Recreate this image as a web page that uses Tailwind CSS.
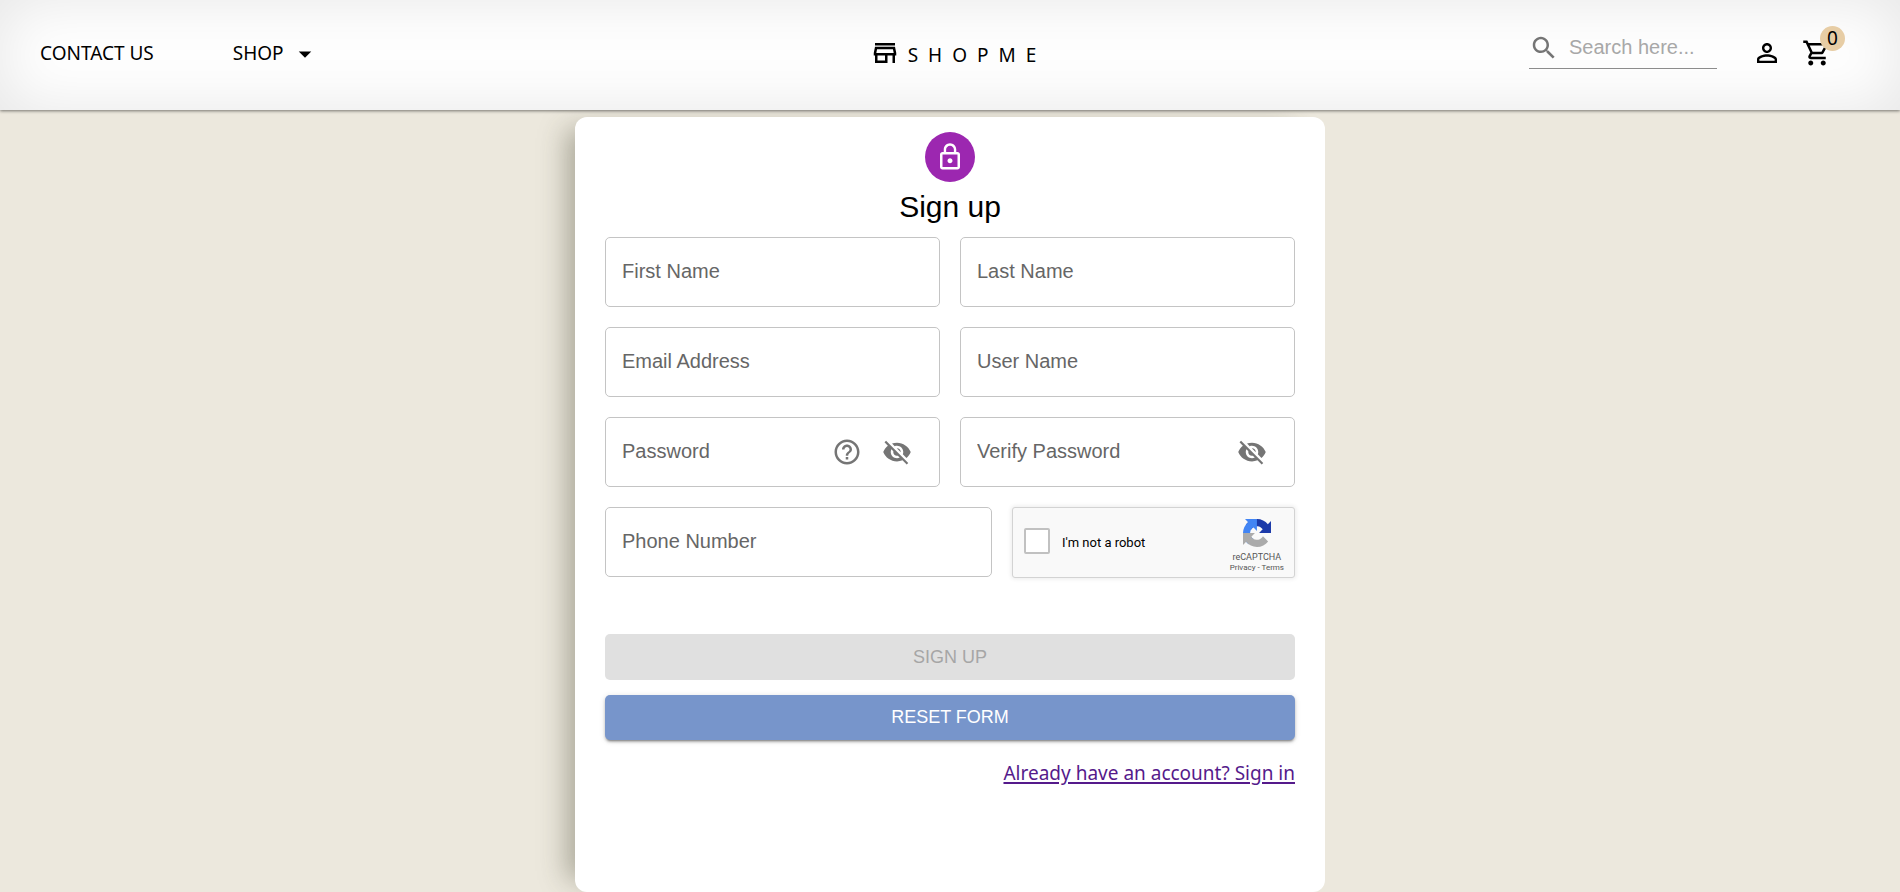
<!DOCTYPE html>
<html lang="en">
<head>
<meta charset="utf-8">
<meta name="viewport" content="width=device-width, initial-scale=1">
<title>ShopMe - Sign up</title>
<script src="https://cdn.jsdelivr.net/npm/@tailwindcss/browser@4"></script>
</head>
<body class="flex min-h-screen flex-col bg-[#ece8dd] font-['Liberation_Sans',Arial,sans-serif] text-xl text-black">

<header class="relative grid h-[110px] grid-cols-[1fr_auto_1fr] items-center bg-white pr-6 pb-1 pl-10 font-['Noto_Sans',sans-serif] text-[19px] shadow-[inset_0_0_64px_rgba(0,0,0,0.1),0_1px_3px_rgba(0,0,0,0.5)]">
  <nav class="flex items-center gap-[79px] pt-px" aria-label="Main">
    <a href="#contact">CONTACT US</a>
    <button type="button" class="flex items-center gap-1.5">SHOP
      <svg class="size-[30px]" viewBox="0 0 24 24" fill="currentColor" aria-hidden="true"><path d="m7 10 5 5 5-5z"/></svg>
    </button>
  </nav>

  <a href="#home" class="flex items-center gap-2">
    <svg class="size-[30px]" viewBox="0 0 24 24" fill="currentColor" aria-hidden="true"><path d="m18.36 9 .6 3H5.04l.6-3h12.72M20 4H4v2h16V4zm0 3H4l-1 5v2h1v6h10v-6h4v6h2v-6h1v-2l-1-5zM6 18v-4h6v4H6z"/></svg>
    <span class="pt-1 tracking-[10px]">SHOPME</span>
  </a>

  <div class="flex items-center justify-end pr-[34px]">
    <div class="mr-[25px] mb-[9px] flex h-10 w-[188px] items-center gap-2.5 border-b border-[#8c8c8c] pb-px font-['Liberation_Sans',Arial,sans-serif] text-xl">
      <svg class="size-[30px] shrink-0 text-[#757575]" viewBox="0 0 24 24" fill="currentColor" aria-hidden="true"><path d="M15.5 14h-.79l-.28-.27C15.41 12.59 16 11.11 16 9.5 16 5.91 13.09 3 9.5 3S3 5.91 3 9.5 5.91 16 9.5 16c1.61 0 3.09-.59 4.23-1.57l.27.28v.79l5 4.99L20.49 19l-4.99-5zm-6 0C7.01 14 5 11.99 5 9.5S7.01 5 9.5 5 14 7.01 14 9.5 11.99 14 9.5 14z"/></svg>
      <input type="search" aria-label="Search" placeholder="Search here..." class="h-8 w-full min-w-0 bg-transparent outline-none placeholder:text-[#a8a8a8]">
    </div>
    <button type="button" class="flex size-[50px] items-center justify-center" aria-label="Account">
      <svg class="size-[30px]" viewBox="0 0 24 24" fill="currentColor" aria-hidden="true"><path d="M12 5.9c1.16 0 2.1.94 2.1 2.1s-.94 2.1-2.1 2.1S9.900 9.160 9.900 8s.94-2.1 2.1-2.1m0 9c2.970 0 6.100 1.460 6.100 2.100v1.100H5.900V17c0-.64 3.130-2.100 6.100-2.100M12 4C9.790 4 8 5.790 8 8s1.790 4 4 4 4-1.790 4-4-1.790-4-4-4zm0 9c-2.670 0-8 1.340-8 4v3h16v-3c0-2.660-5.330-4-8-4z"/></svg>
    </button>
    <button type="button" class="relative flex size-[50px] items-center justify-center" aria-label="Cart, 0 items">
      <svg class="size-[30px]" viewBox="0 0 24 24" fill="currentColor" aria-hidden="true"><path d="M15.550 13c.75 0 1.410-.41 1.750-1.030l3.580-6.490c.37-.66-.11-1.480-.87-1.480H5.210l-.94-2H1v2h2l3.600 7.590-1.350 2.440C4.520 15.370 5.480 17 7 17h12v-2H7l1.100-2h7.450zM6.160 6h12.150l-2.760 5H8.530L6.160 6zM7 18c-1.100 0-1.990.9-1.990 2S5.900 22 7 22s2-.9 2-2-.9-2-2-2zm10 0c-1.100 0-1.990.9-1.990 2s.89 2 1.990 2 2-.9 2-2-.9-2-2-2z"/></svg>
      <span class="absolute top-[-2px] right-[-3px] flex size-[25px] items-center justify-center rounded-full bg-[#e7cda5]">0</span>
    </button>
  </div>
</header>

<main class="mx-auto mt-[7px] flex w-full max-w-[750px] grow flex-col items-center rounded-xl bg-white px-[30px] pt-[15px] pb-10 shadow-[-20px_0_26px_-12px_rgba(60,60,40,0.38)]">
  <div class="flex size-[50px] items-center justify-center rounded-full bg-[#9c27b0] text-white">
    <svg class="size-[30px]" viewBox="0 0 24 24" fill="currentColor" aria-hidden="true"><path d="M12 17c1.100 0 2-.9 2-2s-.9-2-2-2-2 .9-2 2 .9 2 2 2zm6-9h-1V6c0-2.760-2.240-5-5-5S7 3.240 7 6v2H6c-1.100 0-2 .9-2 2v10c0 1.100.9 2 2 2h12c1.100 0 2-.9 2-2V10c0-1.100-.9-2-2-2zM8.900 6c0-1.710 1.390-3.100 3.100-3.100s3.100 1.390 3.100 3.100v2H8.900V6zM18 20H6V10h12v10z"/></svg>
  </div>
  <h1 class="mt-[5px] text-[30px] leading-10">Sign up</h1>

  <form class="mt-2.5 flex w-full flex-col">
    <div class="grid grid-cols-2 gap-5">
      <input type="text" aria-label="First Name" placeholder="First Name" class="h-[70px] w-full min-w-0 rounded-[5px] border border-[#c4c4c4] px-4 pb-0.5 placeholder:text-[#666]">
      <input type="text" aria-label="Last Name" placeholder="Last Name" class="h-[70px] w-full min-w-0 rounded-[5px] border border-[#c4c4c4] px-4 pb-0.5 placeholder:text-[#666]">
      <input type="email" aria-label="Email Address" placeholder="Email Address" class="h-[70px] w-full min-w-0 rounded-[5px] border border-[#c4c4c4] px-4 pb-0.5 placeholder:text-[#666]">
      <input type="text" aria-label="User Name" placeholder="User Name" class="h-[70px] w-full min-w-0 rounded-[5px] border border-[#c4c4c4] px-4 pb-0.5 placeholder:text-[#666]">
      <div class="flex h-[70px] items-center rounded-[5px] border border-[#c4c4c4] pr-[17px] text-[#757575]">
        <input type="password" aria-label="Password" placeholder="Password" class="h-full w-full min-w-0 rounded-[5px] pb-0.5 pl-4 text-black outline-none placeholder:text-[#666]">
        <button type="button" class="flex size-[50px] shrink-0 items-center justify-center" aria-label="Password rules">
          <svg class="size-[30px]" viewBox="0 0 24 24" fill="currentColor" aria-hidden="true"><path d="M11 18h2v-2h-2v2zm1-16C6.480 2 2 6.480 2 12s4.480 10 10 10 10-4.480 10-10S17.520 2 12 2zm0 18c-4.410 0-8-3.590-8-8s3.590-8 8-8 8 3.590 8 8-3.590 8-8 8zm0-14c-2.210 0-4 1.790-4 4h2c0-1.100.9-2 2-2s2 .9 2 2c0 2-3 1.750-3 5h2c0-2.250 3-2.500 3-5 0-2.210-1.790-4-4-4z"/></svg>
        </button>
        <button type="button" class="flex size-[50px] shrink-0 items-center justify-center" aria-label="Show password">
          <svg class="size-[30px]" viewBox="0 0 24 24" fill="currentColor" aria-hidden="true"><path d="M12 7c2.760 0 5 2.240 5 5 0 .65-.13 1.260-.36 1.830l2.920 2.920c1.510-1.260 2.700-2.890 3.430-4.750-1.730-4.390-6-7.500-11-7.500-1.400 0-2.740.25-3.980.7l2.160 2.160C10.740 7.130 11.350 7 12 7zM2 4.270l2.280 2.280.46.46C3.080 8.300 1.780 10.020 1 12c1.730 4.390 6 7.500 11 7.500 1.550 0 3.030-.3 4.380-.84l.42.42L19.730 22 21 20.730 3.270 3 2 4.270zM7.530 9.800l1.550 1.550c-.05.21-.08.43-.08.65 0 1.660 1.340 3 3 3 .22 0 .44-.03.65-.08l1.550 1.550c-.67.33-1.410.53-2.200.53-2.760 0-5-2.240-5-5 0-.79.2-1.530.53-2.200zm4.310-.78 3.150 3.150.02-.16c0-1.660-1.340-3-3-3l-.17.01z"/></svg>
        </button>
      </div>
      <div class="flex h-[70px] items-center rounded-[5px] border border-[#c4c4c4] pr-[17px] text-[#757575]">
        <input type="password" aria-label="Verify Password" placeholder="Verify Password" class="h-full w-full min-w-0 rounded-[5px] pb-0.5 pl-4 text-black outline-none placeholder:text-[#666]">
        <button type="button" class="flex size-[50px] shrink-0 items-center justify-center" aria-label="Show password">
          <svg class="size-[30px]" viewBox="0 0 24 24" fill="currentColor" aria-hidden="true"><path d="M12 7c2.760 0 5 2.240 5 5 0 .65-.13 1.260-.36 1.830l2.920 2.920c1.510-1.260 2.700-2.890 3.430-4.750-1.730-4.390-6-7.500-11-7.500-1.400 0-2.740.25-3.980.7l2.160 2.160C10.740 7.130 11.350 7 12 7zM2 4.270l2.280 2.280.46.46C3.080 8.300 1.780 10.020 1 12c1.730 4.390 6 7.500 11 7.500 1.550 0 3.030-.3 4.380-.84l.42.42L19.730 22 21 20.730 3.270 3 2 4.270zM7.530 9.800l1.550 1.550c-.05.21-.08.43-.08.65 0 1.660 1.340 3 3 3 .22 0 .44-.03.65-.08l1.550 1.550c-.67.33-1.410.53-2.200.53-2.760 0-5-2.240-5-5 0-.79.2-1.530.53-2.200zm4.310-.78 3.150 3.150.02-.16c0-1.660-1.340-3-3-3l-.17.01z"/></svg>
        </button>
      </div>
    </div>

    <div class="mt-5 grid grid-cols-[1fr_283px] items-start gap-5">
      <input type="tel" aria-label="Phone Number" placeholder="Phone Number" class="h-[70px] w-full min-w-0 rounded-[5px] border border-[#c4c4c4] px-4 pb-0.5 placeholder:text-[#666]">
      <div class="flex h-[71px] justify-between rounded-[3px] border border-[#d3d3d3] bg-[#f9f9f9] pr-[10px] pl-[11px] font-[Roboto,sans-serif] shadow-[0_0_4px_1px_rgba(0,0,0,0.08)]">
        <label class="flex items-center gap-3 text-[13px]">
          <input type="checkbox" class="mb-1 size-[26px] appearance-none rounded-[2px] border-2 border-[#c1c1c1] bg-white">
          <span class="pt-0.5">I'm not a robot</span>
        </label>
        <div class="flex flex-col items-center pt-[11px] text-[#555]">
          <svg class="size-7" viewBox="0 0 64 64" aria-hidden="true">
            <path fill="#1c3aa9" d="M64 31.955l-.033-1.370V4.687l-7.160 7.160C50.948 4.674 42.033.093 32.050.093c-10.400 0-19.622 4.960-25.458 12.640l11.736 11.860a15.550 15.550 0 0 1 4.754-5.334c2.050-1.600 4.952-2.906 8.968-2.906.485 0 .86.057 1.135.163 4.976.393 9.288 3.140 11.828 7.124l-8.307 8.307L64 31.953"/>
            <path fill="#4285f4" d="M31.862.094l-1.370.033H4.594l7.160 7.160C4.580 13.147 0 22.060 0 32.046c0 10.400 4.960 19.622 12.640 25.458L24.500 45.768a15.550 15.550 0 0 1-5.334-4.754c-1.600-2.050-2.906-4.952-2.906-8.968 0-.485.057-.86.163-1.135.393-4.976 3.140-9.288 7.124-11.828l8.307 8.307L31.860.095"/>
            <path fill="#ababab" d="M.001 32.045l.033 1.370v25.898l7.160-7.160c5.860 7.173 14.774 11.754 24.760 11.754 10.400 0 19.622-4.960 25.458-12.640l-11.736-11.860a15.550 15.550 0 0 1-4.754 5.334c-2.050 1.600-4.952 2.906-8.968 2.906-.485 0-.86-.057-1.135-.163-4.976-.393-9.288-3.140-11.828-7.124l8.307-8.307c-10.522.04-22.400.066-27.295-.005"/>
          </svg>
          <span class="mt-1 text-[9px] leading-3">reCAPTCHA</span>
          <span class="text-[8px] leading-[10px]"><a href="#privacy">Privacy</a> - <a href="#terms">Terms</a></span>
        </div>
      </div>
    </div>

    <button type="submit" disabled class="mt-14 h-[46px] rounded-[5px] bg-[#e0e0e0] text-lg text-[#a6a6a6]">SIGN UP</button>
    <button type="reset" class="mt-[15px] h-[45px] rounded-[5px] bg-[#7795cb] pb-0.5 text-lg text-white shadow-[0_3px_2px_-2px_rgba(0,0,0,0.3),0_2px_3px_rgba(0,0,0,0.2),0_1px_6px_rgba(0,0,0,0.12)]">RESET FORM</button>
    <a href="#signin" class="mt-[21px] self-end font-['Noto_Sans',sans-serif] text-[19px] leading-6 text-[#551a8b] underline decoration-2 underline-offset-2">Already have an account? Sign in</a>
  </form>
</main>

</body>
</html>
